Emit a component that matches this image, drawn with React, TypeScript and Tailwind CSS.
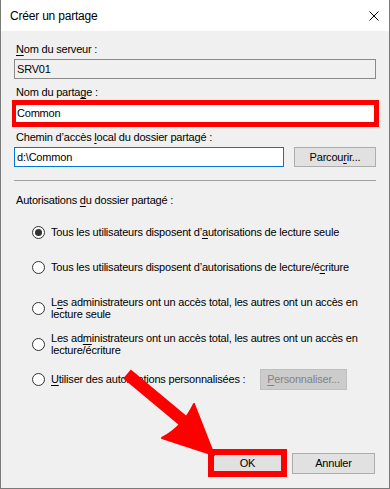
import React from 'react';

const font = { fontFamily: '"Liberation Sans", Arial, sans-serif' };

const Radio: React.FC<{ checked?: boolean; className?: string; children: React.ReactNode }> = ({
  checked,
  className,
  children,
}) => (
  <div className={`flex items-center ml-[18px] ${className ?? ''}`}>
    <span className="w-[13px] h-[13px] rounded-full border border-[#333333] bg-white flex items-center justify-center shrink-0">
      {checked && <span className="w-[7px] h-[7px] rounded-full bg-[#333333]" />}
    </span>
    <span className="ml-[6px] leading-[12px]">{children}</span>
  </div>
);

export default function App() {
  return (
    <div
      style={font}
      className="relative w-[390px] h-[489px] bg-[#f0f0f0] border-x border-b border-[#7a7a7a] flex flex-col text-[11px] tracking-[-0.2px] text-black overflow-hidden"
    >
      {/* Title bar */}
      <div className="h-[31px] bg-white flex items-center justify-between pl-[9px] pr-[10px] shrink-0">
        <span className="text-[12px]">Créer un partage</span>
        <svg width="10" height="10" viewBox="0 0 10 10">
          <path d="M0.5 0.5 L9.5 9.5 M9.5 0.5 L0.5 9.5" stroke="#000" strokeWidth="1" />
        </svg>
      </div>

      {/* Body */}
      <div className="flex flex-col pl-[13px] pr-[13px]">
        <div className="mt-[10px] h-[16px] leading-[16px] pl-[2px]">
          <u className="underline-offset-2">N</u>om du serveur :
        </div>
        <div className="mt-[2px] h-[20px] border border-[#8a8a8a] bg-[#f0f0f0] flex items-center pl-[2px]">
          SRV01
        </div>

        <div className="mt-[5px] h-[16px] leading-[16px] pl-[2px]">
          Nom du parta<u className="underline-offset-2">g</u>e :
        </div>
        <div className="-ml-[2px] -mr-[3px] h-[27px] border-y-[5px] border-l-[4px] border-r-[5px] border-[#ff0000] bg-white flex items-center pl-[1px]">
          Common
        </div>

        <div className="mt-[2px] h-[16px] leading-[16px] pl-[2px]">
          Chemin d’accès <u className="underline-offset-2">l</u>ocal du dossier partagé :
        </div>
        <div className="mt-[2px] flex gap-[10px]">
          <div className="w-[270px] h-[20px] border border-[#0078d7] bg-white flex items-center pl-[2px]">
            d:\Common
          </div>
          <div className="flex-1 h-[20px] border border-[#adadad] bg-[#e1e1e1] flex items-center justify-center">
            Parcou<u className="underline-offset-2">r</u>ir...
          </div>
        </div>

        <div className="mt-[13px] h-px bg-[#a0a0a0]" />

        <div className="mt-[11px] h-[16px] leading-[16px] pl-[2px]">
          Autorisations <u className="underline-offset-2">d</u>u dossier partagé :
        </div>

        <Radio checked className="mt-[16px] h-[16px]">
          Tous les utilisateurs disposent d’<u className="underline-offset-2">a</u>utorisations de lecture seule
        </Radio>
        <Radio className="mt-[19px] h-[16px]">
          Tous les utilisateurs disposent d’autorisations de lecture/é<u className="underline-offset-2">c</u>riture
        </Radio>
        <Radio className="mt-[21px] h-[24px]">
          L<u className="underline-offset-2">e</u>s administrateurs ont un accès total, les autres ont un accès en
          <br />
          lecture seule
        </Radio>
        <Radio className="mt-[12px] h-[24px]">
          Les ad<u className="underline-offset-2">m</u>inistrateurs ont un accès total, les autres ont un accès en
          <br />
          lecture/écriture
        </Radio>
        <div className="mt-[13px] h-[21px] flex items-center ml-[18px]">
          <span className="w-[13px] h-[13px] rounded-full border border-[#333333] bg-white shrink-0" />
          <span className="ml-[6px] w-[209px]">
            <u className="underline-offset-2">U</u>tiliser des autorisations personnalisées :
          </span>
          <div className="w-[87px] h-[21px] border border-[#bfbfbf] bg-[#cccccc] text-[#838383] flex items-center justify-center">
            <u className="underline-offset-2">P</u>ersonnaliser...
          </div>
        </div>
      </div>

      {/* Buttons */}
      <div className="mt-auto pb-[11px] pr-[14px] flex justify-end items-center">
        <div className="w-[79px] h-[28px] border-[6px] border-[#ff0000] bg-[#e1e1e1] flex items-center justify-center mr-[5px]">
          OK
        </div>
        <div className="w-[83px] h-[21px] border border-[#adadad] bg-[#e1e1e1] flex items-center justify-center">
          Annuler
        </div>
      </div>

      {/* Red annotation arrow */}
      <svg className="absolute inset-0 pointer-events-none" width="390" height="489" viewBox="0 0 390 489">
        <line x1="126" y1="374" x2="186" y2="424" stroke="#ff0000" strokeWidth="12" />
        <path d="M161 438 Q182 427 193 404 L213 455 Z" fill="#ff0000" stroke="#ff0000" strokeWidth="2" strokeLinejoin="round" />
      </svg>
    </div>
  );
}
